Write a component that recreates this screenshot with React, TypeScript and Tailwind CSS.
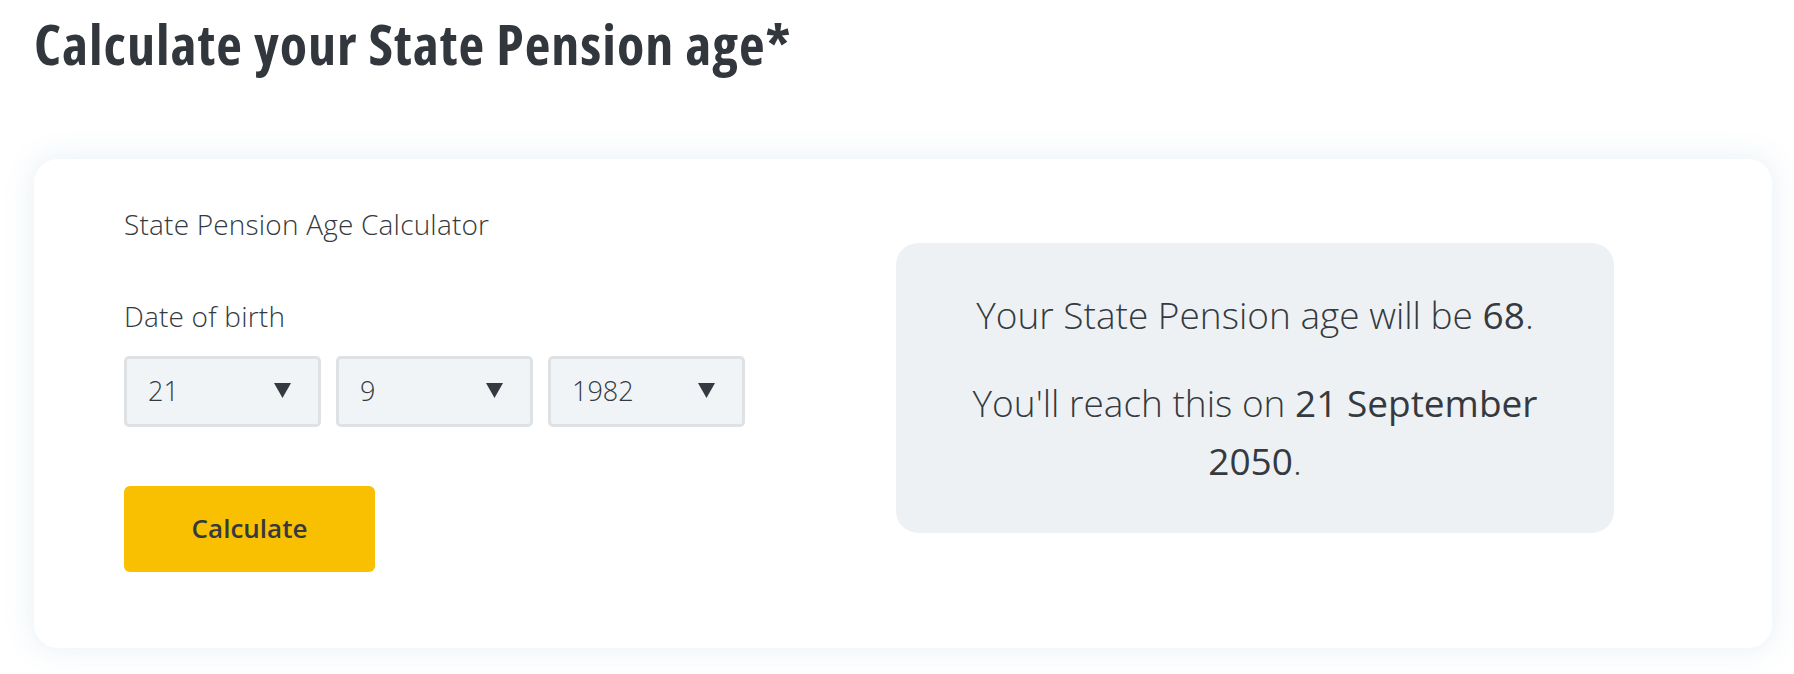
import React, { useState } from "react";

const days = Array.from({ length: 31 }, (_, i) => i + 1);
const months = Array.from({ length: 12 }, (_, i) => i + 1);
const years = Array.from({ length: 100 }, (_, i) => 1930 + i);

function DateSelect({ value, options }: { value: number; options: number[] }) {
  const [current, setCurrent] = useState(value);
  return (
    <div className="relative w-[197px] h-[71px]">
      <select
        value={current}
        onChange={(e) => setCurrent(Number(e.target.value))}
        className="appearance-none w-full h-full rounded-[5px] border-[3px] border-[#dfe2e5] bg-[#f1f4f7] pl-[21px] text-[27px] font-light text-[#343a40] outline-none"
      >
        {options.map((o) => (
          <option key={o} value={o}>
            {o}
          </option>
        ))}
      </select>
      {/* arrow */}
      <svg
        className="pointer-events-none absolute right-[30px] top-[27px]"
        width="17"
        height="15"
        viewBox="0 0 17 15"
      >
        <polygon points="0,0 17,0 8.5,15" fill="#343a40" />
      </svg>
    </div>
  );
}

export default function App() {
  return (
    <main
      className="min-h-screen bg-white pl-[34px] pr-[22px] pt-[15px] text-[#343a40]"
      style={{ fontFamily: '"Open Sans", "Noto Sans", sans-serif' }}
    >
      <h1 className="text-[56px] leading-[56px] font-bold font-stretch-condensed tracking-[1px] text-[#32373d]">
        Calculate your State Pension age*
      </h1>

      <div className="mt-[88px] h-[489px] rounded-[24px] bg-white shadow-[0_0_28px_6px_rgba(40,110,170,0.08)] pl-[90px] pt-[44px] pb-[76px] flex items-center">
        {/* Calculator form */}
        <div className="w-[772px] shrink-0">
          <p className="text-[28px] leading-[40px] font-light tracking-[0.2px]">State Pension Age Calculator</p>

          <p className="mt-[52px] text-[28px] leading-[40px] font-light tracking-[0.2px]">Date of birth</p>
          <div className="mt-[20px] flex gap-[15px]">
            <DateSelect value={21} options={days} />
            <DateSelect value={9} options={months} />
            <DateSelect value={1982} options={years} />
          </div>

          <button className="mt-[59px] w-[251px] h-[86px] rounded-[6px] bg-[#f8c000] text-[26px] font-semibold text-[#343a40]">
            Calculate
          </button>
        </div>

        {/* Result */}
        <div className="w-[718px] h-[290px] shrink-0 rounded-[22px] bg-[#eef1f4] px-[56px] flex flex-col justify-center text-center text-[37px] leading-[58px] font-light">
          <p>
            Your State Pension age will be <span className="font-normal">68</span>.
          </p>
          <p className="mt-[30px]">
            You'll reach this on <span className="font-normal">21 September 2050</span>.
          </p>
        </div>
      </div>
    </main>
  );
}
